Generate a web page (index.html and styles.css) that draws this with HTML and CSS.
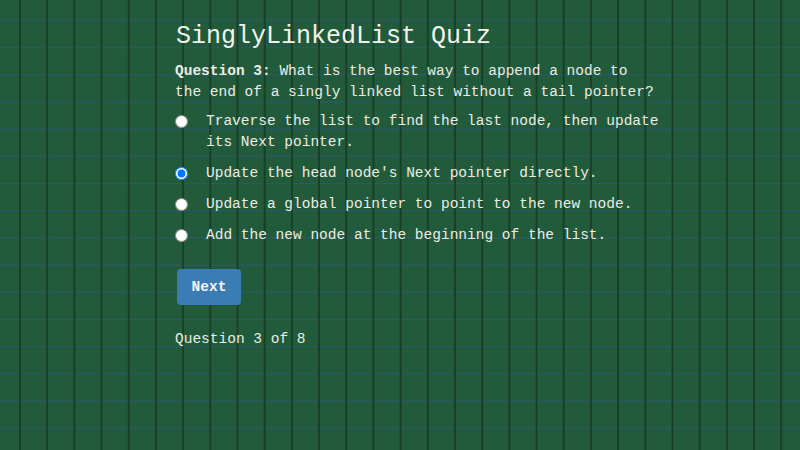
FILE: index.html
```html
<!DOCTYPE html>
<html lang="en">
<head>
<meta charset="utf-8">
<title>SinglyLinkedList Quiz</title>
<link rel="stylesheet" href="styles.css">
</head>
<body>
<main class="quiz">
  <h1 class="title">SinglyLinkedList Quiz</h1>
  <p class="question"><strong>Question 3:</strong> What is the best way to append a node to the end of a singly linked list without a tail pointer?</p>
  <ul class="options">
    <li class="option"><input type="radio" name="q" id="o1"><label for="o1">Traverse the list to find the last node, then update its Next pointer.</label></li>
    <li class="option"><input type="radio" name="q" id="o2" checked><label for="o2">Update the head node's Next pointer directly.</label></li>
    <li class="option"><input type="radio" name="q" id="o3"><label for="o3">Update a global pointer to point to the new node.</label></li>
    <li class="option"><input type="radio" name="q" id="o4"><label for="o4">Add the new node at the beginning of the list.</label></li>
  </ul>
  <button class="next" type="button">Next</button>
  <p class="progress">Question 3 of 8</p>
</main>
</body>
</html>
```
FILE: styles.css
```css
html, body {
  margin: 0;
  padding: 0;
  height: 100%;
}
body {
  background-color: #215b3c;
  background-image:
    linear-gradient(to right, #183f28 2px, transparent 2px),
    linear-gradient(to bottom, #2d5772 1px, transparent 1px);
  background-size: 27.2px 27.2px;
  background-position: 19px 20px;
  color: #ecece4;
  font-family: Courier, "Courier New", "Liberation Mono", monospace;
  font-size: 14.5px;
}
.quiz {
  width: 485px;
  margin-left: 175px;
  padding-top: 20px;
}
.title {
  margin: 0 0 0 1px;
  font-size: 25px;
  font-weight: normal;
  line-height: 34px;
  color: #f2f2ec;
}
.question {
  margin: 7px 0 8px;
  line-height: 21px;
}
.question strong {
  font-weight: bold;
}
.options {
  list-style: none;
  margin: 0;
  padding: 0;
  display: flex;
  flex-direction: column;
  gap: 10px;
}
.option {
  display: flex;
  align-items: flex-start;
  line-height: 21px;
}
.option input {
  margin: 4px 18px 0 0;
  width: 13px;
  height: 13px;
  flex: none;
}
.option label {
  flex: 1;
}
.next {
  margin: 23px 0 0 2px;
  width: 64px;
  height: 36px;
  border: none;
  border-radius: 4px;
  background: #3a7db4;
  color: #f4f4f4;
  font-family: inherit;
  font-weight: bold;
  font-size: 14.5px;
  padding: 0;
}
.progress {
  margin: 24px 0 0;
  line-height: 21px;
}
```
